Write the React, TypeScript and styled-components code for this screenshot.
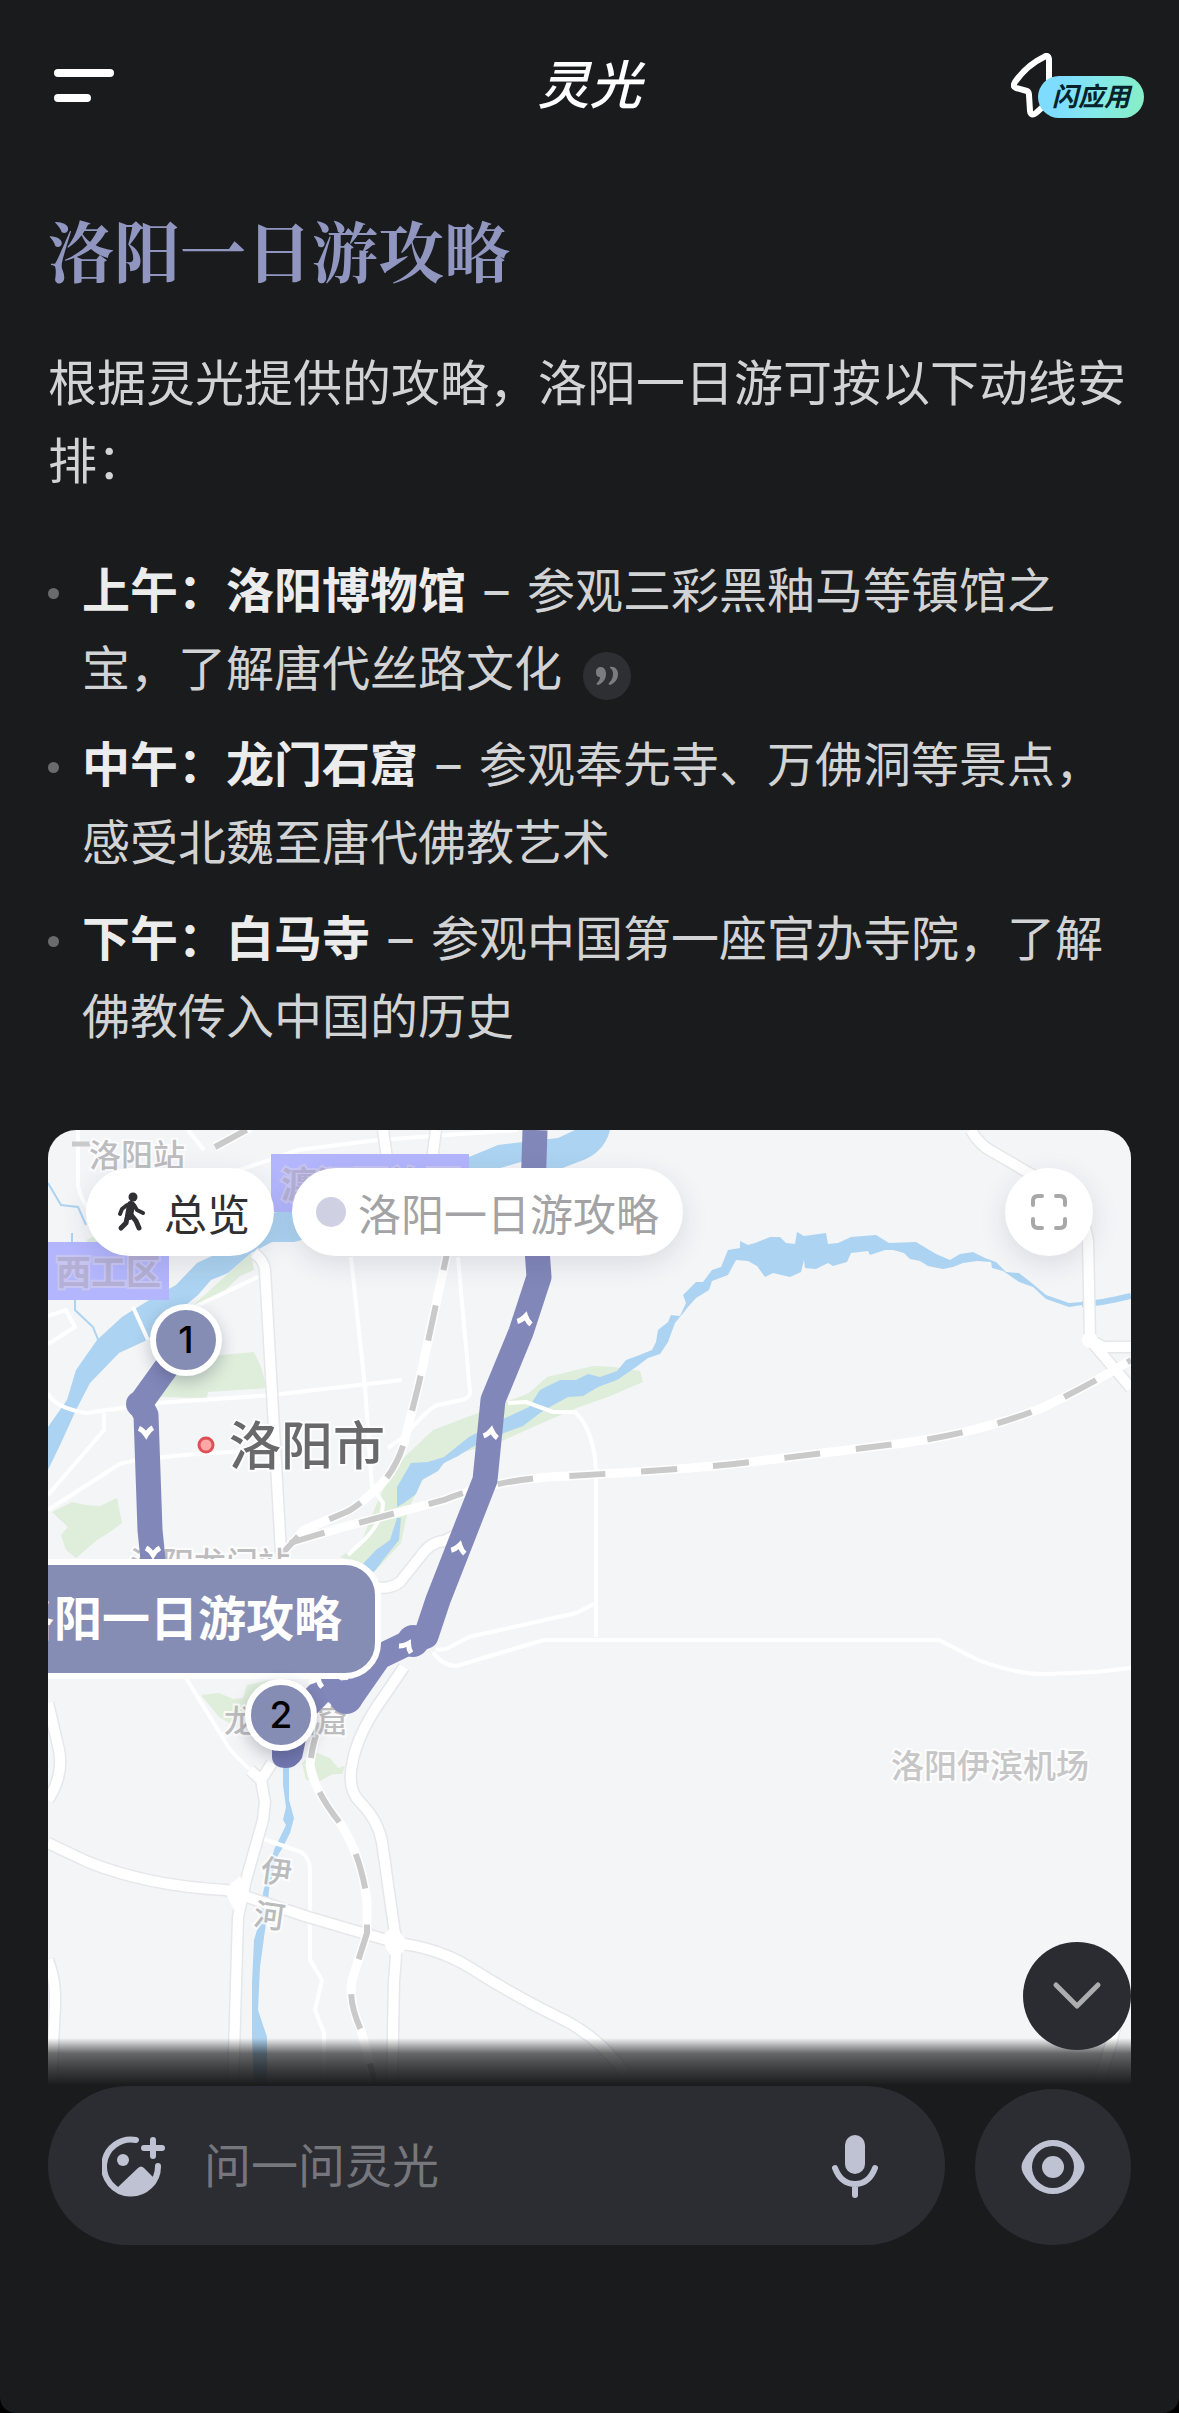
import React from "react";
import styled, { createGlobalStyle } from "styled-components";

const sans = `Inter, "Noto Sans CJK SC", sans-serif`;
const cjk = `"Noto Sans CJK SC", sans-serif`;

const GlobalStyle = createGlobalStyle`
  *, *::before, *::after { box-sizing: border-box; }
  body { margin: 0; background: #000; }
  button { border: 0; padding: 0; background: none; font: inherit; color: inherit; cursor: pointer; }
  svg { display: block; }
`;

const Page = styled.div`
  min-height: 100vh;
  display: flex;
  flex-direction: column;
  background: #1a1b1c;
  border-radius: 0 0 16px 16px;
  color: #d2d3d4;
  font-family: ${sans};
`;

const Header = styled.header`
  display: grid;
  grid-template-columns: 1fr auto 1fr;
  align-items: center;
  height: 170px;
  padding: 0 35px;
`;

const MenuButton = styled.button`
  justify-self: start;
  display: flex;
  flex-direction: column;
  gap: 17px;
  padding: 16px 19px;
`;

const MenuBar = styled.span<{ $short?: boolean }>`
  width: ${(p) => (p.$short ? 37 : 60)}px;
  height: 8px;
  border-radius: 4px;
  background: #fff;
`;

const Brand = styled.div`
  padding-bottom: 6px;
  font: italic 500 52px/60px ${cjk};
  color: #fff;
`;

const FlashButton = styled.button`
  justify-self: end;
  display: flex;
  align-items: flex-end;
`;

const FlashPill = styled.span`
  margin-left: -16px;
  padding: 0 14px 4px;
  border-radius: 21px;
  background: linear-gradient(100deg, #7ddcff 20%, #84e9ea 55%, #86efc4);
  font: italic 700 26px/38px ${cjk};
  color: #06222b;
`;

const Content = styled.main`
  display: flex;
  flex-direction: column;
  padding: 34px 48px 0;
`;

const Title = styled.h1`
  margin: 0 0 51px;
  font: 700 66px/90px "Noto Serif CJK SC", "Noto Sans CJK SC", serif;
  color: #9096c0;
`;

const Intro = styled.p`
  margin: 0 0 51px;
  font-size: 49px;
  line-height: 78px;
`;

const Stops = styled.ul`
  list-style: none;
  display: flex;
  flex-direction: column;
  gap: 18px;
  margin: 0 0 74px;
  padding: 0;
`;

const Stop = styled.li`
  display: grid;
  grid-template-columns: 11px 1fr;
  column-gap: 23px;
  font-size: 48px;
  line-height: 78px;

  &::before {
    content: "";
    width: 11px;
    height: 11px;
    margin-top: 36px;
    border-radius: 50%;
    background: #6a6b6d;
  }
`;

const StopName = styled.strong`
  font-weight: 700;
  color: #ececed;
`;

const Dash = styled.span`
  margin: 0 5px;
`;

const QuoteButton = styled.button`
  display: inline-flex;
  align-items: center;
  justify-content: center;
  width: 48px;
  height: 48px;
  margin-left: 21px;
  border-radius: 50%;
  background: #2e2f32;
  vertical-align: baseline;
`;

const MapCard = styled.section`
  position: relative;
  aspect-ratio: 1083 / 956;
  border-radius: 28px 28px 0 0;
  overflow: hidden;
  background: #f4f5f7;
`;

const MapCanvas = styled.svg`
  display: block;
  width: 100%;
  height: 100%;
`;

const MapBar = styled.div`
  position: absolute;
  inset: 38px 38px auto;
  display: flex;
  align-items: center;
  gap: 18px;
`;

const Chip = styled.button<{ $muted?: boolean }>`
  display: flex;
  align-items: center;
  gap: 12px;
  height: 88px;
  padding: 0 24px;
  border-radius: 44px;
  background: #fff;
  box-shadow: 0 8px 28px rgba(40, 44, 70, 0.12);
  font: 400 43px/60px ${cjk};
  color: ${(p) => (p.$muted ? "#a3a3a5" : "#303033")};
`;

const ChipDot = styled.span`
  width: 30px;
  height: 30px;
  border-radius: 50%;
  background: #cfd0e2;
`;

const RoundButton = styled.button<{ $size: number; $bg: string }>`
  display: flex;
  align-items: center;
  justify-content: center;
  flex: none;
  width: ${(p) => p.$size}px;
  height: ${(p) => p.$size}px;
  border-radius: 50%;
  background: ${(p) => p.$bg};
`;

const ExpandButton = styled(RoundButton)`
  margin-left: auto;
  box-shadow: 0 8px 28px rgba(40, 44, 70, 0.12);
`;

const Callout = styled.div`
  position: absolute;
  top: 429px;
  right: 750px;
  padding: 0 33px 8px;
  border: 6px solid #fff;
  border-radius: 36px;
  background: #868db5;
  font: 700 48px/100px ${cjk};
  color: #fff;
  white-space: nowrap;
`;

const Pin = styled.button<{ $x: number; $y: number }>`
  position: absolute;
  left: ${(p) => p.$x}px;
  top: ${(p) => p.$y}px;
  width: 72px;
  height: 72px;
  margin: -36px 0 0 -36px;
  border: 6px solid #fff;
  border-radius: 50%;
  background: #868db5;
  box-shadow: 0 6px 16px rgba(30, 34, 60, 0.25);
  font: 500 37px/60px ${sans};
  color: #000;
`;

const MapFade = styled.div`
  position: absolute;
  inset: auto 0 0;
  height: 48px;
  background: linear-gradient(rgba(26, 27, 28, 0), rgba(26, 27, 28, 0.65) 32%, rgba(26, 27, 28, 0.82) 60%, #1a1b1c 98%);
`;

const ScrollDown = styled(RoundButton)`
  position: absolute;
  right: 0;
  bottom: 36px;
`;

const Composer = styled.footer`
  display: flex;
  align-items: flex-end;
  gap: 30px;
  margin-top: auto;
  padding: 0 48px 168px;
`;

const AskForm = styled.form`
  flex: 1;
  display: flex;
  align-items: center;
  gap: 38px;
  height: 159px;
  padding: 3px 66px 0 54px;
  border-radius: 80px;
  background: #2c2d32;
`;

const AskInput = styled.input`
  flex: 1;
  min-width: 0;
  padding: 0 0 8px;
  border: 0;
  outline: 0;
  background: none;
  font: 400 47px/72px ${cjk};
  color: #d2d3d4;

  &::placeholder { color: #76777d; opacity: 1; }
`;

const mainRoads = [
  "M206 123Q216 130 217 140L224 263L233 423",
  "M335 0L341 42M388 0L384 30",
  "M923 0Q930 14 945 22L981 43Q1020 62 1034 84L1040 110L1042 210L1083 258M1042 210L1055 217L1083 217",
  "M325 457Q342 460 352 452L372 427Q382 412 396 411Q420 400 430 385",
  "M356 537L330 575Q310 605 305 630Q298 658 312 672Q330 690 334 712L346 797Q350 815 346 850L344 956",
  "M0 713L40 732Q100 756 178 760L260 787L349 813Q390 818 421 837Q470 868 512 888Q550 906 577 943",
  "M213 650L217 672L215 690L198 750L190 787L185 956M224 633L213 650L202 640",
  "M0 573L11 620Q16 645 0 670M0 830Q8 850 7 875L3 956",
  "M1083 868Q1070 880 1064 910L1050 956",
];

const thinRoads = [
  "M303 127L317 257L324 357L335 373Q335 390 318 408L300 425",
  "M410 127L422 262Q422 268 414 270L390 275Q380 278 356 307L340 318",
  "M0 263Q5 277 38 283L110 273L224 265L354 250",
  "M0 380L70 335Q80 329 163 323L224 320",
  "M56 283L56 300L0 365M30 0V55Q34 80 60 95M85 177L100 210M0 214L27 197L18 180L0 186",
  "M146 177L210 147",
  "M460 273L478 272L505 282L527 282Q546 300 548 340V507",
  "M385 522Q395 536 408 536L496 510L891 510L930 530Q970 545 1000 544L1048 542L1083 538",
  "M388 520L398 519L421 507L528 483L548 473",
  "M138 548L178 613Q182 622 206 643",
  "M210 707L253 722Q262 728 262 740V830L274 850L267 880L276 903V956",
  "M100 50L180 44L250 20L330 10L470 0M140 0L156 20",
];

const rails = [
  "M403 105L371 253L356 313Q346 345 324 363Q305 380 296 383L256 400L233 425",
  "M242 413L292 398L396 370Q440 352 500 347Q640 340 711 331L856 313Q930 303 994 278Q1040 256 1083 230",
  "M272 593Q264 615 262 635Q266 660 292 693Q313 725 319 770L319 803L304 850Q300 872 313 900L328 956",
  "M167 17L202 -2",
];

const arrows: [number, number, number][] = [
  [477, 189, 12],
  [443, 303, 8],
  [411, 418, 14],
  [359, 516, 30],
  [269, 551, 20],
  [98, 302, 178],
  [105, 422, 180],
];

const MapLabel = styled.text<{ $size: number; $fill: string; $bold?: boolean }>`
  font: ${(p) => (p.$bold ? 700 : 500)} ${(p) => p.$size}px ${cjk};
  fill: ${(p) => p.$fill};
  stroke: ${(p) => (p.$bold ? "#cdcaf0" : "#fff")};
  stroke-opacity: 0.8;
  stroke-width: 4px;
  paint-order: stroke;
`;

function MapDrawing() {
  return (
    <MapCanvas viewBox="0 0 1083 956" preserveAspectRatio="xMinYMin slice" aria-hidden="true">
      <g fill="#dfeddb">
        <path d="M292 427L313 413L329 373L346 337L385 300L438 280L481 263L499 247L545 236L566 237L592 241L595 252L560 267L531 277L485 297L456 310L413 323L381 340L371 357L360 380L353 413L328 440Z" />
        <path d="M108 267L117 247L153 227L206 222L213 237L219 258L160 262L159 268Z" />
        <path d="M4 382L24 372L38 375L52 376L69 368L74 393L62 402L49 410L28 428L18 420L13 405L20 397Z" />
        <path d="M140 180L203 123L206 140L192 146L174 163Z" />
        <path d="M153 565L171 563L185 569L195 568L199 555L221 550L210 575L181 593L171 587Z" />
        <path d="M254 633L267 622L282 628L290 638L297 636L294 644L285 644L272 651L258 650Z" />
        <path d="M38 110L60 100L70 112L45 116Z" />
      </g>
      <g fill="#acd3f1">
        <path d="M0 297L19 270L28 240L49 210L74 187L106 167L128 155L149 133L192 113L224 83L300 70L421 27L450 15L510 8L527 0H562Q556 24 530 32L512 39L498 38L480 30L445 40L330 90L246 112L224 112L203 123L180 143L163 150L150 165L128 183L99 210L71 223L42 253L28 280L13 313L0 340Z" />
        <path d="M349 377L349 357L363 333L380 332L396 327L421 307L453 290L481 277L492 260L512 250L528 250L540 244L552 247L569 241L578 230L589 226L604 220L608 212L610 200L620 192L623 185L632 186L638 173L635 165L648 152L655 152L664 140L673 137L680 120L692 118L692 111L700 115L707 113L722 107L732 107L738 113L747 114L749 102L756 106L778 103L780 114L790 113L803 107L828 105L841 113L868 112L888 124L902 130L912 124L925 122L937 128L948 132L958 142L971 143L985 154L998 165L1021 173L1034 172L1034 175L1021 177L998 169L985 157L971 152L955 141L944 138L943 132L929 131L915 133L905 137L895 139L880 136L872 131L862 129L856 123L845 120L837 120L822 125L820 121L803 123L799 132L785 136L780 133L768 139L757 138L756 130L753 142L742 147L725 143L717 147L709 136L700 131L688 130L680 145L664 151L661 160L648 168L640 177L627 193L620 212L612 224L600 228L588 237L569 250L550 257L535 266L520 267L500 278L492 283L475 296L456 303L440 315L431 313L410 326L396 333L390 341L374 350L368 364L356 373Z" />
        <path d="M349 388H353L351 410L335 430L326 442L312 437L328 420L342 410Z" />
        <path d="M235 630H241V670L246 688L242 703L235 717L229 727L221 760L218 793L212 837L210 880L219 907V956H206L204 907V853L206 810L212 790L215 763L226 720L238 695L235 690L238 677L235 655Z" />
      </g>
      <g fill="none" stroke="#acd3f1">
        <path d="M1034 174Q1050 174 1083 166" strokeWidth="6" />
        <path d="M0 53L13 75L30 77L38 95M24 103V118L30 112M27 165V180L45 197L51 212" strokeWidth="2" />
      </g>
      <g fill="none" stroke="#fff" strokeWidth="4" strokeLinejoin="round">
        {thinRoads.map((d) => <path key={d} d={d} />)}
      </g>
      <g fill="none" stroke="#e6e7ea" strokeWidth="13" strokeLinejoin="round">
        {mainRoads.map((d) => <path key={d} d={d} />)}
      </g>
      <g fill="none" stroke="#fff" strokeWidth="10" strokeLinejoin="round">
        {mainRoads.map((d) => <path key={d} d={d} />)}
      </g>
      <path d="M176 760L192 746L202 765L186 780Z M334 806L346 795L358 810L372 815L356 820L347 832L338 818Z" fill="#fff" />
      <circle cx="1042" cy="210" r="8" fill="#fff" />
      <g fill="none" stroke="#fff" strokeWidth="9">
        {rails.map((d) => <path key={d} d={d} />)}
      </g>
      <g fill="none" stroke="#cacaca" strokeWidth="6" strokeDasharray="36">
        {rails.map((d) => <path key={d} d={d} />)}
      </g>
      <path d="M24 14H42" stroke="#cacaca" strokeWidth="5" />

      <path d="M223 24H421V82H223ZM0 112H121V170H0Z" fill="#b3b6fc" />
      <MapLabel x="233" y="68" $size={36} $fill="#b4afd4" $bold>瀍河回族区</MapLabel>
      <MapLabel x="8" y="155" $size={35} $fill="#b4afd4" $bold>西工区</MapLabel>
      <MapLabel x="41" y="37" $size={32} $fill="#bdbdbf">洛阳站</MapLabel>
      <MapLabel x="82" y="445" $size={32} $fill="#bdbdbf">洛阳龙门站</MapLabel>
      <MapLabel x="176" y="602" $size={31} $fill="#bdbdbf">龙门石窟</MapLabel>
      <MapLabel x="843" y="648" $size={33} $fill="#c6c6c7">洛阳伊滨机场</MapLabel>
      <MapLabel x="213" y="753" $size={31} $fill="#b9bbbd" transform="rotate(8 229 742)">伊</MapLabel>
      <MapLabel x="206" y="797" $size={31} $fill="#b9bbbd" transform="rotate(8 222 785)">河</MapLabel>

      <g fill="none" stroke="#8287ba" strokeWidth="25" strokeLinejoin="round">
        <path d="M138 210L92 274L98 285L102 400L108 460" />
        <path d="M487 0L485 63L491 147L473 202L445 270L437 350L390 470L378 506L360 513L331 527L301 570L278 556L255 580L238 625" />
      </g>
      <g fill="#8287ba">
        <circle cx="91" cy="274" r="13" />
        <circle cx="365" cy="511" r="16" />
        <circle cx="298" cy="567" r="17" />
      </g>
      <path d="M224 600H260L254 628Q248 638 238 638Q224 638 224 626Z" fill="#7278b0" />
      <g fill="none" stroke="#fff" strokeWidth="5">
        {arrows.map(([x, y, r]) => (
          <path key={`${x}-${y}`} d="M-7 4Q-3 2 0 -3Q3 2 7 4" transform={`translate(${x} ${y}) rotate(${r})`} />
        ))}
      </g>
      <circle cx="158" cy="315" r="7" fill="#ffa6a6" stroke="#dd5058" strokeWidth="3" />
      <MapLabel x="181" y="335" $size={52} $fill="#69696b">洛阳市</MapLabel>
    </MapCanvas>
  );
}

export default function App() {
  return (
    <>
      <GlobalStyle />
      <Page>
        <Header>
          <MenuButton aria-label="菜单">
            <MenuBar />
            <MenuBar $short />
          </MenuButton>
          <Brand>灵光</Brand>
          <FlashButton>
            <svg width="43" height="65" viewBox="0 0 43 65" fill="none" stroke="#fff" strokeWidth="6" strokeLinecap="round" strokeLinejoin="round" aria-hidden="true">
              <path d="M38 28L38 6Q37 1 33 4Q16 12 4 29Q1 34 5 35L16 38Q18 39 18 42L19 58Q20 64 25 60L36 50" />
            </svg>
            <FlashPill>闪应用</FlashPill>
          </FlashButton>
        </Header>

        <Content>
          <Title>洛阳一日游攻略</Title>
          <Intro>根据灵光提供的攻略，洛阳一日游可按以下动线安排：</Intro>
          <Stops>
            <Stop>
              <div>
                <StopName>上午：洛阳博物馆</StopName> <Dash>–</Dash> 参观三彩黑釉马等镇馆之宝，了解唐代丝路文化
                <QuoteButton aria-label="引用来源">
                  <svg width="24" height="20" viewBox="0 0 24 20" fill="#7b7c7f" aria-hidden="true">
                    <path d="M6 1C9 1 11 4 11 8C11 13 8 17 3 19C2 19 1 18 2 17C4 15 5 13 5 11C2 11 1 9 1 6C1 3 3 1 6 1Z" />
                    <path d="M15 1C20 0 23 4 23 8C23 13 20 17 15 19C14 19 13 18 14 17C17 14 18 11 18 8C18 5 17 3 15 2Z" />
                  </svg>
                </QuoteButton>
              </div>
            </Stop>
            <Stop>
              <div>
                <StopName>中午：龙门石窟</StopName> <Dash>–</Dash> 参观奉先寺、万佛洞等景点，感受北魏至唐代佛教艺术
              </div>
            </Stop>
            <Stop>
              <div>
                <StopName>下午：白马寺</StopName> <Dash>–</Dash> 参观中国第一座官办寺院，了解佛教传入中国的历史
              </div>
            </Stop>
          </Stops>

          <MapCard aria-label="洛阳一日游地图">
            <MapDrawing />
            <Callout>洛阳一日游攻略</Callout>
            <Pin $x={138} $y={210}>1</Pin>
            <Pin $x={233} $y={585}>2</Pin>
            <MapBar>
              <Chip>
                <svg width="42" height="42" viewBox="0 0 42 42" fill="none" stroke="#303033" strokeLinecap="round" strokeLinejoin="round" aria-hidden="true">
                  <circle cx="23" cy="6" r="4.500" fill="#303033" stroke="none" />
                  <path d="M21 14L19 25" strokeWidth="8" />
                  <path d="M17 14L12 18L10 23M24 14L27 19L33 22" strokeWidth="4" />
                  <path d="M22 25L26 30L29 37M17 27L16 32L11 37" strokeWidth="5" />
                </svg>
                总览
              </Chip>
              <Chip $muted>
                <ChipDot />
                洛阳一日游攻略
              </Chip>
              <ExpandButton $size={88} $bg="#fff" aria-label="全屏">
                <svg width="40" height="40" viewBox="0 0 40 40" fill="none" stroke="#a8a8aa" strokeWidth="4" strokeLinecap="round" aria-hidden="true">
                  <path d="M4 13V9Q4 4 9 4H13M27 4H31Q36 4 36 9V13M36 27V31Q36 36 31 36H27M13 36H9Q4 36 4 31V27" />
                </svg>
              </ExpandButton>
            </MapBar>
            <MapFade />
            <ScrollDown $size={108} $bg="#2b2c31" aria-label="滚动到底部">
              <svg width="50" height="30" viewBox="0 0 50 30" fill="none" stroke="#adadb0" strokeWidth="5" strokeLinecap="round" strokeLinejoin="round" aria-hidden="true">
                <path d="M4 4L25 25L46 4" />
              </svg>
            </ScrollDown>
          </MapCard>
        </Content>

        <Composer>
          <AskForm onSubmit={(e) => e.preventDefault()}>
            <button type="button" aria-label="添加图片">
              <svg width="64" height="62" viewBox="0 0 64 62" fill="none" stroke="#bfc2d2" strokeWidth="6" strokeLinecap="round" aria-hidden="true">
                <path d="M34 4A27 27 0 1 0 56 30" />
                <path d="M51 4V20M42 12H60" />
                <circle cx="21" cy="24" r="6" fill="#bfc2d2" stroke="none" />
                <path d="M16 51L36 32Q39 29 42 32L53 43Q45 59 30 59Q21 58 16 51Z" fill="#bfc2d2" stroke="none" />
              </svg>
            </button>
            <AskInput type="text" aria-label="问一问灵光" placeholder="问一问灵光" />
            <button type="button" aria-label="语音输入">
              <svg width="48" height="64" viewBox="0 0 48 64" fill="none" stroke="#bfc2d2" strokeWidth="6" strokeLinecap="round" aria-hidden="true">
                <rect x="14" y="0" width="20" height="39" rx="10" fill="#bfc2d2" stroke="none" />
                <path d="M4 33Q10 49 24 49Q38 49 44 33M24 49V60" />
              </svg>
            </button>
          </AskForm>
          <RoundButton $size={156} $bg="#2c2d32" aria-label="看一看">
            <svg width="64" height="54" viewBox="0 0 64 54" fill="#bfc2d2" aria-hidden="true">
              <path fillRule="evenodd" d="M32 0C45 0 55 8 62 21Q65 27 62 33C55 46 45 54 32 54C19 54 9 46 2 33Q-1 27 2 21C9 8 19 0 32 0ZM32 6A21 21 0 1 0 32 48A21 21 0 1 0 32 6Z" />
              <circle cx="32" cy="27" r="11" />
            </svg>
          </RoundButton>
        </Composer>
      </Page>
    </>
  );
}
